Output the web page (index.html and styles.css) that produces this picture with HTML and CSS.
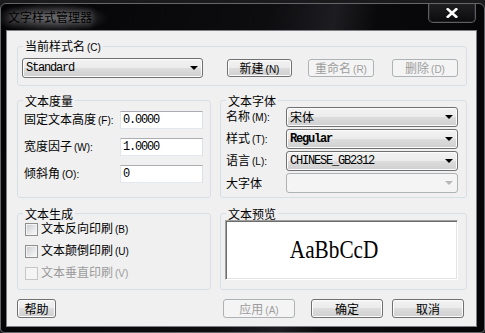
FILE: index.html
```html
<!DOCTYPE html>
<html lang="zh-CN">
<head>
<meta charset="utf-8">
<title>文字样式管理器</title>
<link rel="stylesheet" href="styles.css">
</head>
<body>
<div class="window">
  <div class="titlebar">
    <span class="title">文字样式管理器</span>
    <button class="close" aria-label="关闭"><svg width="12" height="10" viewBox="0 0 12 10"><path d="M1.8 1.2 L10.2 8.8 M10.2 1.2 L1.8 8.8" stroke="#fff" stroke-width="2.6" stroke-linecap="square"/></svg></button>
  </div>
  <div class="frame">
    <div class="client">
      <fieldset class="group">
        <legend>当前样式名<span class="k">(C)</span></legend>
        <div class="style-row">
          <div class="combo combo-style"><span class="mono">Standard</span><svg class="arrow" width="8" height="4" viewBox="0 0 8 4"><polygon points="0,0 8,0 4,4" fill="#000"/></svg></div>
          <button class="btn btn-new">新建<span class="k">(N)</span></button>
          <button class="btn btn-rename" disabled>重命名<span class="k">(R)</span></button>
          <button class="btn btn-del" disabled>删除<span class="k">(D)</span></button>
        </div>
      </fieldset>

      <div class="row row-mid">
        <fieldset class="group group-left">
          <legend>文本度量</legend>
          <div class="metrics">
            <span class="lbl">固定文本高度<span class="k">(F):</span></span>
            <div class="textbox mono">0.0000</div>
            <span class="lbl">宽度因子<span class="k">(W):</span></span>
            <div class="textbox mono">1.0000</div>
            <span class="lbl">倾斜角<span class="k">(O):</span></span>
            <div class="textbox mono">0</div>
          </div>
        </fieldset>
        <fieldset class="group group-right">
          <legend>文本字体</legend>
          <div class="fonts">
            <span class="lbl">名称<span class="k">(M):</span></span>
            <div class="combo"><span>宋体</span><svg class="arrow" width="8" height="4" viewBox="0 0 8 4"><polygon points="0,0 8,0 4,4" fill="#000"/></svg></div>
            <span class="lbl">样式<span class="k">(T):</span></span>
            <div class="combo"><span class="mono bold">Regular</span><svg class="arrow" width="8" height="4" viewBox="0 0 8 4"><polygon points="0,0 8,0 4,4" fill="#000"/></svg></div>
            <span class="lbl">语言<span class="k">(L):</span></span>
            <div class="combo"><span class="mono">CHINESE_GB2312</span><svg class="arrow" width="8" height="4" viewBox="0 0 8 4"><polygon points="0,0 8,0 4,4" fill="#000"/></svg></div>
            <span class="lbl">大字体</span>
            <div class="combo combo-disabled"><span></span><svg class="arrow" width="8" height="4" viewBox="0 0 8 4"><polygon points="0,0 8,0 4,4" fill="#b8b8b8"/></svg></div>
          </div>
        </fieldset>
      </div>

      <div class="row row-low">
        <fieldset class="group group-left">
          <legend>文本生成</legend>
          <div class="checks">
            <div class="check"><span class="cb"></span><span>文本反向印刷<span class="k">(B)</span></span></div>
            <div class="check"><span class="cb"></span><span>文本颠倒印刷<span class="k">(U)</span></span></div>
            <div class="check check-disabled"><span class="cb"></span><span>文本垂直印刷<span class="k">(V)</span></span></div>
          </div>
        </fieldset>
        <fieldset class="group group-right">
          <legend>文本预览</legend>
          <div class="preview-wrap">
            <div class="preview"><span class="sample">AaBbCcD</span></div>
          </div>
        </fieldset>
      </div>

      <div class="actions">
        <button class="btn btn-help">帮助</button>
        <button class="btn btn-apply" disabled>应用<span class="k">(A)</span></button>
        <button class="btn btn-ok">确定</button>
        <button class="btn btn-cancel">取消</button>
      </div>
    </div>
  </div>
</div>
</body>
</html>
```

FILE: styles.css
```css
* { box-sizing: border-box; }
html, body { margin: 0; padding: 0; }
body {
  width: 485px;
  height: 333px;
  overflow: hidden;
  padding-top: 3px;
  background: #1b1b1d;
  font-family: "Noto Sans CJK SC", "Noto Sans", sans-serif;
  font-size: 12px;
  color: #000;
}

.window {
  width: 485px;
  height: 330px;
  border: 1px solid #646669;
  border-radius: 6px 6px 4px 4px;
  background:
    radial-gradient(ellipse 58px 15px at 50px 14px, rgba(150,150,155,.55), rgba(110,110,115,.25) 65%, transparent 100%),
    linear-gradient(100deg, #040406 0%, #0d0d10 50%, #1d1d21 62%, #09090b 70%, #050507 100%);
  display: flex;
  flex-direction: column;
  overflow: hidden;
}

.titlebar {
  height: 26px;
  display: flex;
  align-items: flex-start;
  padding-left: 7px;
}
.title {
  line-height: 26px;
  color: #000;
  text-shadow: 0 0 6px rgba(200,200,200,.55), 0 0 11px rgba(200,200,200,.35);
}
.close {
  margin: -1px 8px 0 auto;
  width: 48px;
  height: 20px;
  padding: 0;
  border: 1px solid #5d5f62;
  border-top: none;
  border-radius: 0 0 5px 5px;
  background: linear-gradient(#202023, #0b0b0d);
  box-shadow: inset 0 0 0 1px rgba(255,255,255,.07);
  display: flex;
  align-items: center;
  justify-content: center;
}

.frame {
  flex: 1;
  padding: 0 7px 5px 5px;
}
.client {
  height: 297px;
  border: 1px solid #7d7f83;
  background: #f0f0f0;
  padding: 8px 9px 10px 10px;
  display: flex;
  flex-direction: column;
}

.group {
  margin: 0;
  padding: 0;
  min-width: 0;
  border: 1px solid #d5dfe5;
  border-radius: 3px;
}
.group legend {
  padding: 0 2px;
  margin-left: 5px;
  line-height: 13px;
  font-size: 12px;
}
.k {
  font-family: "Liberation Sans", sans-serif;
  font-size: 10px;
  margin-left: 2px;
}

.mono {
  font-family: "Liberation Mono", monospace;
  font-size: 12px;
  letter-spacing: -1.2px;
}
.bold { font-weight: bold; }

.style-row {
  display: flex;
  align-items: center;
  padding: 4px 8px 7px 4px;
}

.combo {
  height: 20px;
  border: 1px solid #707070;
  border-radius: 3px;
  background: linear-gradient(#f2f2f2 0%, #ebebeb 50%, #dddddd 50%, #cfcfcf 100%);
  box-shadow: inset 0 0 0 1px #fcfcfc;
  display: flex;
  align-items: center;
  justify-content: space-between;
  padding: 0 4px 0 3px;
  line-height: 18px;
  white-space: nowrap;
}
.combo-style { width: 181px; }
.combo-disabled {
  border-color: #adb2b5;
  background: #f4f4f4;
  box-shadow: none;
}
.arrow { flex: none; }

.btn {
  height: 18px;
  padding: 0;
  border: 1px solid #707070;
  border-radius: 3px;
  background: linear-gradient(#f2f2f2 0%, #ebebeb 50%, #dddddd 50%, #cfcfcf 100%);
  box-shadow: inset 0 0 0 1px #fcfcfc;
  font-family: "Noto Sans CJK SC", "Noto Sans", sans-serif;
  font-size: 12px;
  line-height: 16px;
  color: #000;
  text-align: center;
}
.btn:disabled {
  border-color: #adb2b5;
  background: #f4f4f4;
  box-shadow: none;
  color: #9d9d9d;
}
.btn-new { width: 65px; margin-left: 24px; }
.btn-rename { width: 66px; margin-left: 16px; }
.btn-del { width: 66px; margin-left: 18px; }

.row {
  display: flex;
  gap: 9px;
}
.row-mid { margin-top: 8px; }
.row-low { margin-top: 9px; }
.group-left { width: 194px; flex: none; }
.group-right { flex: 1; }

.metrics {
  display: grid;
  grid-template-columns: 1fr 83px;
  grid-auto-rows: 18px;
  row-gap: 9px;
  align-items: center;
  padding: 4px 7px 14px 6px;
}
.lbl { white-space: nowrap; line-height: 16px; }
.textbox {
  height: 18px;
  background: #fff;
  border: 1px solid;
  border-color: #abadb3 #dbdfe6 #e3e9ef #e2e3ea;
  padding-left: 2px;
  line-height: 16px;
}

.fonts {
  display: grid;
  grid-template-columns: 1fr 172px;
  grid-auto-rows: 20px;
  row-gap: 2px;
  align-items: center;
  padding: 0 8px 4px 5px;
}

.checks {
  display: flex;
  flex-direction: column;
  gap: 6px;
  padding: 1px 0 8px 7px;
}
.check {
  height: 16px;
  display: flex;
  align-items: center;
  gap: 3px;
  line-height: 16px;
}
.cb {
  width: 13px;
  height: 13px;
  flex: none;
  border: 1px solid #8e8f8f;
  background: linear-gradient(135deg, #c6c8ca 0%, #e9eaeb 60%, #f7f7f7 100%);
  box-shadow: inset 0 0 0 1px #f4f4f4;
}
.check-disabled { color: #9a9a9a; }
.check-disabled .cb {
  border-color: #c4c6c8;
  background: #f4f4f4;
}

.preview-wrap { padding: 0 8px 0 4px; }
.preview {
  width: 233px;
  height: 60px;
  background: #fff;
  border: 1px solid;
  border-color: #a0a0a0 #ffffff #ffffff #a0a0a0;
  box-shadow: inset 1px 1px 0 #6d6d6d, inset -1px -1px 0 #e3e3e3;
  display: flex;
  align-items: center;
  justify-content: center;
  padding-right: 14px;
}
.sample {
  font-family: "Liberation Serif", serif;
  font-size: 25px;
  line-height: 28px;
  display: inline-block;
  transform: scaleX(0.85);
}

.actions {
  display: flex;
  margin-top: 9px;
  height: 19px;
}
.actions .btn { height: 19px; line-height: 17px; }
.btn-help { width: 39px; }
.btn-apply { width: 72px; margin-left: auto; }
.btn-ok { width: 72px; margin-left: 16px; }
.btn-cancel { width: 72px; margin-left: 9px; margin-right: 3px; }
```
